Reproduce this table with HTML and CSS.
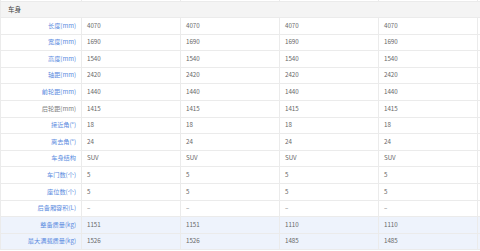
FILE: index.html
```html
<!DOCTYPE html>
<html lang="zh">
<head>
<meta charset="utf-8">
<link rel="stylesheet" href="styles.css">
</head>
<body>
<table class="spec">
  <colgroup>
    <col class="c-label"><col class="c-val"><col class="c-val"><col class="c-val"><col class="c-val"><col class="c-edge">
  </colgroup>
  <tr class="top"><td></td><td></td><td></td><td></td><td></td><td></td></tr>
  <tr class="group"><td colspan="6">车身</td></tr>
  <tr><th>长度(mm)</th><td>4070</td><td>4070</td><td>4070</td><td>4070</td><td></td></tr>
  <tr><th>宽度(mm)</th><td>1690</td><td>1690</td><td>1690</td><td>1690</td><td></td></tr>
  <tr><th>高度(mm)</th><td>1540</td><td>1540</td><td>1540</td><td>1540</td><td></td></tr>
  <tr><th>轴距(mm)</th><td>2420</td><td>2420</td><td>2420</td><td>2420</td><td></td></tr>
  <tr><th>前轮距(mm)</th><td>1440</td><td>1440</td><td>1440</td><td>1440</td><td></td></tr>
  <tr><th class="plain">后轮距(mm)</th><td>1415</td><td>1415</td><td>1415</td><td>1415</td><td></td></tr>
  <tr><th>接近角(°)</th><td>18</td><td>18</td><td>18</td><td>18</td><td></td></tr>
  <tr><th>离去角(°)</th><td>24</td><td>24</td><td>24</td><td>24</td><td></td></tr>
  <tr><th>车身结构</th><td>SUV</td><td>SUV</td><td>SUV</td><td>SUV</td><td></td></tr>
  <tr><th>车门数(个)</th><td>5</td><td>5</td><td>5</td><td>5</td><td></td></tr>
  <tr><th>座位数(个)</th><td>5</td><td>5</td><td>5</td><td>5</td><td></td></tr>
  <tr><th>后备厢容积(L)</th><td>–</td><td>–</td><td>–</td><td>–</td><td></td></tr>
  <tr class="hl"><th>整备质量(kg)</th><td>1151</td><td>1151</td><td>1110</td><td>1110</td><td></td></tr>
  <tr class="hl"><th>最大满载质量(kg)</th><td>1526</td><td>1526</td><td>1485</td><td>1485</td><td></td></tr>
</table>
</body>
</html>
```
FILE: styles.css
```css
html, body {
  margin: 0;
  padding: 0;
  background: #fff;
  overflow: hidden;
  width: 480px;
  height: 251px;
}
.spec {
  border-collapse: collapse;
  table-layout: fixed;
  width: 480px;
  font-family: "Noto Sans CJK SC", "Noto Sans", sans-serif;
  font-size: 6.2px;
  color: #666;
}
.c-label { width: 81px; }
.c-val { width: 99px; }
.c-edge { width: 3px; }
.spec td, .spec th {
  border: 1px solid #ebebeb;
  height: 15.6px;
  padding: 0 0 0 5px;
  text-align: left;
  font-weight: normal;
  white-space: nowrap;
  overflow: hidden;
  line-height: 1;
}
.spec th {
  text-align: right;
  padding: 0 5px 0 0;
  color: #5a8be0;
}
.spec th.plain { color: #808080; }
.spec tr.top td {
  height: 1px;
  padding: 0;
  font-size: 0;
  border-top: none;
}
.spec tr.group td {
  height: 15px;
  background: #f4f4f4;
  color: #444;
  font-size: 6.6px;
  padding-left: 7px;
}
.spec tr.hl td, .spec tr.hl th { background: #eef3fc; }
.spec td:nth-child(6) { padding: 0; border-left-color: #e0e0e0; }
```
